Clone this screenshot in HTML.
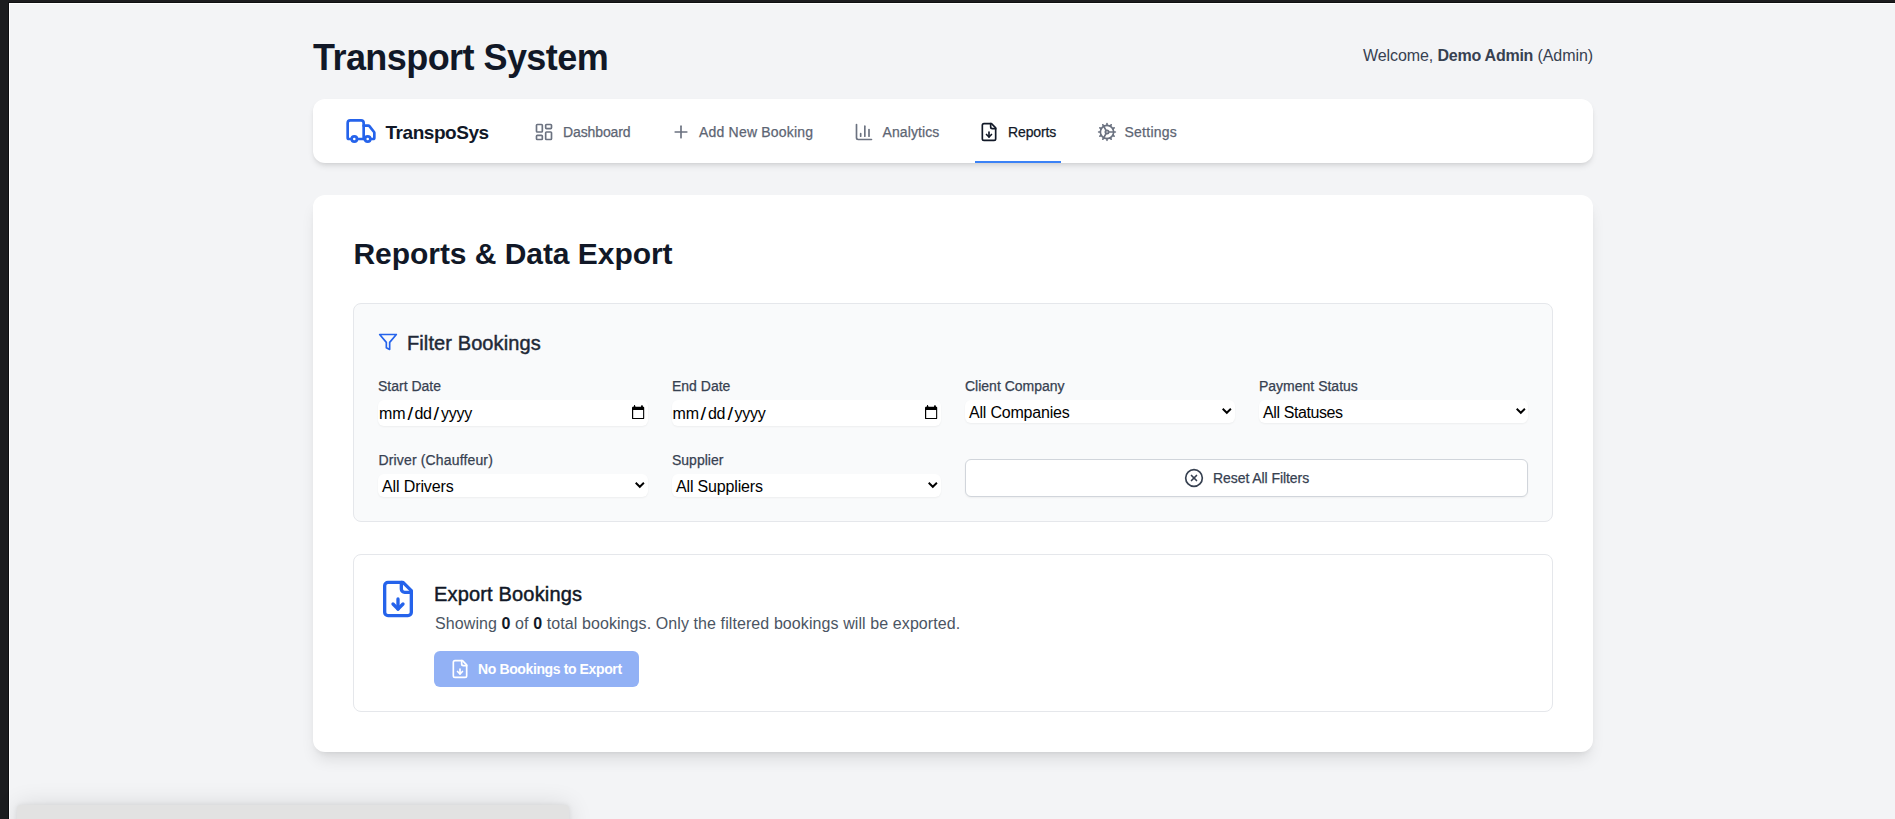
<!DOCTYPE html>
<html><head><meta charset="utf-8">
<style>
*{box-sizing:border-box;margin:0;padding:0}
html,body{width:1895px;height:819px;overflow:hidden;background:#1c1d1f;font-family:"Liberation Sans",sans-serif}
.abs{position:absolute}
#edgeL{left:8px;top:2px;width:1px;height:817px;background:#0e0f11}
#edgeT{left:8px;top:2px;width:1887px;height:1px;background:#0e0f11}
#page{left:9px;top:3px;width:1886px;height:816px;background:#f3f4f6;border-left:1px solid #fff;border-top:1px solid #fff;overflow:hidden}
.t{position:absolute;white-space:nowrap}
svg{position:absolute;fill:none;stroke-linecap:round;stroke-linejoin:round}
.nl{top:125px;font-size:14px;line-height:14px;color:#5d6573;-webkit-text-stroke:0.25px currentColor}
.lbl{font-size:14px;line-height:14px;color:#374151;-webkit-text-stroke:0.25px currentColor}
.val{font-size:16px;line-height:16px;color:#000;letter-spacing:-0.32px}
.sl{display:inline-block;margin:0 2.3px 0 2.4px;letter-spacing:0;transform:scale(1.25,1.12)}
.inp{background:#fff;border-radius:6px;box-shadow:0 1px 2px 0 rgba(0,0,0,.05)}
.semi{-webkit-text-stroke:0.45px currentColor}
</style></head>
<body>
<div id="edgeL" class="abs"></div>
<div id="edgeT" class="abs"></div>
<div id="page" class="abs"></div>
<div id="content" class="abs" style="left:0;top:0;width:1895px;height:819px">

<!-- header -->
<div class="t" id="h1" style="left:313px;top:40px;font-size:36px;line-height:36px;letter-spacing:-0.56px;font-weight:700;color:#111827">Transport System</div>
<div class="t" id="welcome" style="left:1363px;top:48px;font-size:16px;line-height:16px;letter-spacing:-0.08px;color:#374151">Welcome, <b style="font-weight:700;letter-spacing:-0.25px">Demo Admin</b> (Admin)</div>

<!-- nav -->
<div class="abs" id="nav" style="left:313px;top:99px;width:1280px;height:64px;background:#fff;border-radius:12px;box-shadow:0 4px 6px -1px rgba(0,0,0,.1),0 2px 4px -2px rgba(0,0,0,.1)"></div>

<!-- main card -->
<div class="abs" id="card" style="left:313px;top:195px;width:1280px;height:557px;background:#fff;border-radius:12px;box-shadow:0 10px 15px -3px rgba(0,0,0,.1),0 4px 6px -4px rgba(0,0,0,.1)"></div>

<div class="abs" id="filterbox" style="left:353px;top:303px;width:1200px;height:219px;background:#f9fafb;border:1px solid #e5e7eb;border-radius:8px"></div>
<div class="abs" id="exportbox" style="left:353px;top:554px;width:1200px;height:158px;background:#fff;border:1px solid #e5e7eb;border-radius:8px"></div>


<!-- nav content -->
<svg id="truck" style="left:345px;top:115px" width="32" height="32" viewBox="0 0 24 24" stroke="#2563eb" stroke-width="2"><path d="M14 18V6a2 2 0 0 0-2-2H4a2 2 0 0 0-2 2v11a1 1 0 0 0 1 1h2"/><path d="M15 18H9"/><path d="M19 18h2a1 1 0 0 0 1-1v-3.65a1 1 0 0 0-.22-.624l-3.48-4.35A1 1 0 0 0 17.52 8H14"/><circle cx="17" cy="18" r="2"/><circle cx="7" cy="18" r="2"/></svg>
<div class="t" id="brand" style="left:385.5px;top:123px;font-size:19px;line-height:19px;font-weight:700;color:#111827;letter-spacing:-0.45px">TranspoSys</div>

<svg style="left:534px;top:122px" width="20" height="20" viewBox="0 0 24 24" stroke="#6b7280" stroke-width="2"><rect width="7" height="9" x="3" y="3" rx="1"/><rect width="7" height="5" x="14" y="3" rx="1"/><rect width="7" height="9" x="14" y="12" rx="1"/><rect width="7" height="5" x="3" y="16" rx="1"/></svg>
<div class="t nl" style="left:563px;letter-spacing:-0.11px">Dashboard</div>

<svg style="left:671px;top:122px" width="20" height="20" viewBox="0 0 24 24" stroke="#6b7280" stroke-width="2"><path d="M5 12h14"/><path d="M12 5v14"/></svg>
<div class="t nl" style="left:699px;letter-spacing:0.2px">Add New Booking</div>

<svg style="left:854px;top:122px" width="20" height="20" viewBox="0 0 24 24" stroke="#6b7280" stroke-width="2"><path d="M3 3v16a2 2 0 0 0 2 2h16"/><path d="M18 17V9"/><path d="M13 17V5"/><path d="M8 17v-3"/></svg>
<div class="t nl" style="left:882.5px;letter-spacing:0.1px">Analytics</div>

<svg style="left:979px;top:122px" width="20" height="20" viewBox="0 0 24 24" stroke="#111827" stroke-width="2"><path d="M15 2H6a2 2 0 0 0-2 2v16a2 2 0 0 0 2 2h12a2 2 0 0 0 2-2V7Z"/><path d="M14 2v4a2 2 0 0 0 2 2h4"/><path d="M12 18v-6"/><path d="m9 15 3 3 3-3"/></svg>
<div class="t nl" style="left:1008px;color:#111827;letter-spacing:-0.13px">Reports</div>
<div class="abs" style="left:975px;top:161px;width:86px;height:2px;background:#3b82f6"></div>

<svg style="left:1097px;top:122px" width="20" height="20" viewBox="0 0 24 24" stroke="#6b7280" stroke-width="2"><path d="M12 20a8 8 0 1 0 0-16 8 8 0 0 0 0 16Z"/><path d="M12 14a2 2 0 1 0 0-4 2 2 0 0 0 0 4Z"/><path d="M12 2v2"/><path d="M12 22v-2"/><path d="m17 20.66-1-1.73"/><path d="M11 10.27 7 3.34"/><path d="m20.66 17-1.73-1"/><path d="m3.34 7 1.73 1"/><path d="M14 12h8"/><path d="M2 12h2"/><path d="m20.66 7-1.73 1"/><path d="m3.34 17 1.73-1"/><path d="m17 3.34-1 1.73"/><path d="m11 13.73-4 6.93"/></svg>
<div class="t nl" style="left:1124.5px;letter-spacing:0.25px">Settings</div>

<!-- main title -->
<div class="t" id="title" style="left:353.5px;top:239px;font-size:30px;line-height:30px;font-weight:700;color:#111827;letter-spacing:-0.05px">Reports &amp; Data Export</div>

<!-- filter header -->
<svg style="left:378px;top:332px" width="20" height="20" viewBox="0 0 24 24" stroke="#2563eb" stroke-width="2"><polygon points="22 3 2 3 10 12.46 10 19 14 21 14 12.46 22 3"/></svg>
<div class="t semi" style="left:407px;top:333px;font-size:20px;line-height:20px;color:#1f2937;letter-spacing:0.1px">Filter Bookings</div>

<!-- labels -->
<div class="t lbl" style="left:378px;top:379px">Start Date</div>
<div class="t lbl" style="left:672px;top:379px">End Date</div>
<div class="t lbl" style="left:965px;top:379px">Client Company</div>
<div class="t lbl" style="left:1259px;top:379px">Payment Status</div>
<div class="t lbl" style="left:378.5px;top:453px;letter-spacing:0.15px">Driver (Chauffeur)</div>
<div class="t lbl" style="left:672px;top:453px">Supplier</div>

<!-- date inputs -->
<div class="abs inp" style="left:378px;top:400px;width:269.5px;height:26px"></div>
<div class="t val" style="left:379px;top:406px;letter-spacing:-0.2px">mm<span class="sl">/</span>dd<span class="sl">/</span>yyyy</div>
<svg style="left:630px;top:404px" width="16" height="16" viewBox="0 0 16 16" stroke="none"><path fill="#000" d="M3.6 3L4.2 1.1h0.7L5.5 3zM10.9 3L11.6 1.1h0.7L13.1 3z"/><rect x="2" y="2.8" width="12.2" height="12.3" rx="0.9" fill="#000"/><rect x="3.2" y="6" width="9.9" height="8" fill="#fff"/></svg>

<div class="abs inp" style="left:671.5px;top:400px;width:269.5px;height:26px"></div>
<div class="t val" style="left:672.5px;top:406px;letter-spacing:-0.2px">mm<span class="sl">/</span>dd<span class="sl">/</span>yyyy</div>
<svg style="left:923px;top:404px" width="16" height="16" viewBox="0 0 16 16" stroke="none"><path fill="#000" d="M3.6 3L4.2 1.1h0.7L5.5 3zM10.9 3L11.6 1.1h0.7L13.1 3z"/><rect x="2" y="2.8" width="12.2" height="12.3" rx="0.9" fill="#000"/><rect x="3.2" y="6" width="9.9" height="8" fill="#fff"/></svg>

<!-- selects row1 -->
<div class="abs inp" style="left:965px;top:400px;width:269.5px;height:23px"></div>
<div class="t val" style="left:969px;top:405px;letter-spacing:-0.2px">All Companies</div>
<svg class="chev" style="left:1219px;top:403px" width="16" height="16" viewBox="0 0 16 16" stroke="#000" stroke-width="2"><path d="M3.7 5.8l4.1 4 4.1-4" stroke-width="1.9" stroke-linecap="butt" stroke-linejoin="miter"/></svg>

<div class="abs inp" style="left:1258.5px;top:400px;width:269.5px;height:23px"></div>
<div class="t val" style="left:1263px;top:405px;letter-spacing:-0.4px">All Statuses</div>
<svg class="chev" style="left:1513px;top:403px" width="16" height="16" viewBox="0 0 16 16" stroke="#000" stroke-width="2"><path d="M3.7 5.8l4.1 4 4.1-4" stroke-width="1.9" stroke-linecap="butt" stroke-linejoin="miter"/></svg>

<!-- selects row2 -->
<div class="abs inp" style="left:378px;top:474px;width:269.5px;height:23px"></div>
<div class="t val" style="left:382px;top:479px;letter-spacing:-0.12px">All Drivers</div>
<svg class="chev" style="left:632px;top:477px" width="16" height="16" viewBox="0 0 16 16" stroke="#000" stroke-width="2"><path d="M3.7 5.8l4.1 4 4.1-4" stroke-width="1.9" stroke-linecap="butt" stroke-linejoin="miter"/></svg>

<div class="abs inp" style="left:671.5px;top:474px;width:269.5px;height:23px"></div>
<div class="t val" style="left:676px;top:479px;letter-spacing:-0.16px">All Suppliers</div>
<svg class="chev" style="left:925px;top:477px" width="16" height="16" viewBox="0 0 16 16" stroke="#000" stroke-width="2"><path d="M3.7 5.8l4.1 4 4.1-4" stroke-width="1.9" stroke-linecap="butt" stroke-linejoin="miter"/></svg>

<!-- reset button -->
<div class="abs" style="left:965px;top:459px;width:563px;height:38px;background:#fff;border:1px solid #d1d5db;border-radius:6px;box-shadow:0 1px 2px 0 rgba(0,0,0,.05)"></div>
<svg style="left:1184px;top:468px" width="20" height="20" viewBox="0 0 24 24" stroke="#374151" stroke-width="2"><circle cx="12" cy="12" r="10"/><path d="m15 9-6 6"/><path d="m9 9 6 6"/></svg>
<div class="t" style="left:1213px;top:471px;font-size:14px;line-height:14px;color:#374151;letter-spacing:-0.07px;-webkit-text-stroke:0.25px currentColor">Reset All Filters</div>

<!-- export -->
<svg style="left:378px;top:579px" width="40" height="40" viewBox="0 0 24 24" stroke="#2563eb" stroke-width="2"><path d="M15 2H6a2 2 0 0 0-2 2v16a2 2 0 0 0 2 2h12a2 2 0 0 0 2-2V7Z"/><path d="M14 2v4a2 2 0 0 0 2 2h4"/><path d="M12 18v-6"/><path d="m9 15 3 3 3-3"/></svg>
<div class="t semi" style="left:434px;top:584px;font-size:20px;line-height:20px;color:#111827;letter-spacing:0.17px">Export Bookings</div>
<div class="t" id="showing" style="left:435px;top:616px;font-size:16px;line-height:16px;color:#4b5563;letter-spacing:0.09px">Showing <b style="color:#111827">0</b> of <b style="color:#111827">0</b> total bookings. Only the filtered bookings will be exported.</div>

<div class="abs" style="left:434px;top:651px;width:205px;height:36px;background:#92b1f5;border-radius:6px"></div>
<svg style="left:450px;top:659px" width="20" height="20" viewBox="0 0 24 24" stroke="#fff" stroke-width="2"><path d="M15 2H6a2 2 0 0 0-2 2v16a2 2 0 0 0 2 2h12a2 2 0 0 0 2-2V7Z"/><path d="M14 2v4a2 2 0 0 0 2 2h4"/><path d="M12 18v-6"/><path d="m9 15 3 3 3-3"/></svg>
<div class="t" style="left:478px;top:662px;font-size:14px;line-height:14px;font-weight:700;color:#fff;letter-spacing:-0.38px">No Bookings to Export</div>

<!-- bottom-left panel -->
<div class="abs" id="toast" style="left:17px;top:805px;width:552px;height:40px;background:#e2e2e2;border-radius:4px;box-shadow:0 0 24px rgba(0,0,0,.12),0 0 5px rgba(0,0,0,.08)"></div>

</div>
</body></html>
